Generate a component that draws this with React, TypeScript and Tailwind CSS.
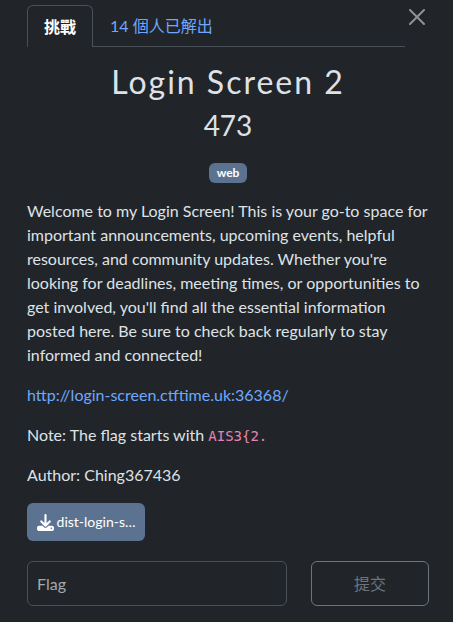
import { FaDownload } from "react-icons/fa6";

export default function App() {
  return (
    <main className="min-h-screen bg-[#212529] pt-[5px] pr-6 pb-4 pl-[27px] font-['Lato','Noto_Sans_CJK_TC',sans-serif] text-base leading-6 text-[#dee2e6]">
      <header className="flex items-start justify-between pr-1">
        <nav role="tablist" className="flex flex-1 border-b border-[#495057]">
          <button role="tab" aria-selected="true" className="-mb-px h-[42px] rounded-t-md border border-b-0 border-[#495057] bg-[#212529] px-4 font-bold text-white">挑戰</button>
          <button role="tab" aria-selected="false" className="h-[41px] px-[17px] text-[#6ea8fe]">14 個人已解出</button>
        </nav>
        <button aria-label="Close" className="mt-1 ml-1 text-[#909294]">
          <svg viewBox="0 0 16 16" className="size-4" stroke="currentColor" strokeWidth="2" strokeLinecap="round"><path d="M1 1 15 15M15 1 1 15" /></svg>
        </button>
      </header>
      <h1 className="mt-4 text-center text-[32px] leading-[38px] tracking-[2px]">Login Screen 2</h1>
      <h2 className="mt-1 text-center text-[28px] leading-10">473</h2>
      <div className="mt-[18px] flex justify-center"><span className="rounded-md bg-[#5b7290] px-2 py-1 text-xs leading-3 font-bold text-white">web</span></div>
      <div className="mt-4 space-y-4">
        <p>Welcome to my Login Screen! This is your go-to space for important announcements, upcoming events, helpful resources, and community updates. Whether you're looking for deadlines, meeting times, or opportunities to get involved, you'll find all the essential information posted here. Be sure to check back regularly to stay informed and connected!</p>
        <p><a href="http://login-screen.ctftime.uk:36368/" className="text-[#6ea8fe]">http://login-screen.ctftime.uk:36368/</a></p>
        <p>Note: The flag starts with <code className="font-['DejaVu_Sans_Mono',monospace] text-sm leading-4 text-[#e685b5]">AIS3&#123;2.</code></p>
        <p>Author: Ching367436</p>
      </div>
      <button className="mt-4 flex h-[38px] w-[118px] items-center justify-center gap-[3px] rounded-md bg-[#5b7290] text-sm text-white"><FaDownload className="size-[17px]" />dist-login-s…</button>
      <form className="mt-5 flex gap-6">
        <input aria-label="Flag" placeholder="Flag" className="h-[45px] min-w-0 flex-1 rounded-md border border-[#495057] px-[9px] placeholder:text-[#a5a9ad]" />
        <button type="button" className="h-[45px] w-[118px] rounded-md border border-[#6c757d] text-[#6c757d]">提交</button>
      </form>
    </main>
  );
}
